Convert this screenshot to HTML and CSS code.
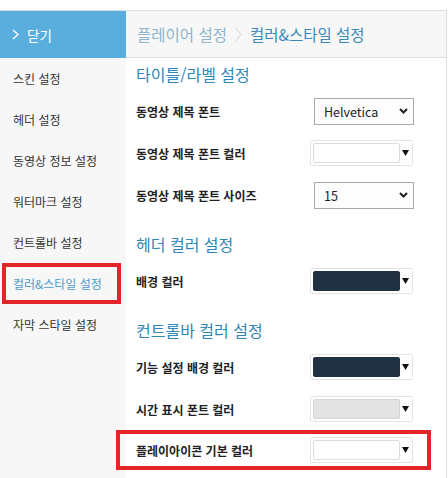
FILE: index.html
```html
<!DOCTYPE html>
<html lang="ko">
<head>
    <meta charset="UTF-8">
    <meta name="viewport" content="width=device-width, initial-scale=1.0">
    <title>플레이어 설정</title>
    <link rel="stylesheet" href="styles.css">
</head>
<body>

    <div class="panel">
        <aside class="side">
            <div class="side-close">
                <svg class="close-arrow" width="7" height="11" viewBox="0 0 7 11"><path d="M1 1 L6 5.5 L1 10" fill="none" stroke="#fff" stroke-width="1.3"/></svg>
                닫기
            </div>
            <ul class="menu">
                <li>스킨 설정</li>
                <li>헤더 설정</li>
                <li>동영상 정보 설정</li>
                <li>워터마크 설정</li>
                <li>컨트롤바 설정</li>
                <li class="active">컬러&amp;스타일 설정</li>
                <li>자막 스타일 설정</li>
            </ul>
        </aside>

        <main class="main">
            <div class="crumb">
                <span class="crumb-parent">플레이어 설정</span>
                <svg class="crumb-sep" width="7" height="15" viewBox="0 0 7 15"><path d="M1 1 L6 7.5 L1 14" fill="none" stroke="#d4d4d4" stroke-width="1"/></svg>
                <span class="crumb-current">컬러&amp;스타일 설정</span>
            </div>

            <div class="content">
                <!-- 타이틀/라벨 -->
                <section class="group">
                    <h2>타이틀/라벨 설정</h2>
                    <div class="row">
                        <label>동영상 제목 폰트</label>
                        <div class="select">Helvetica
                            <svg width="9" height="6" viewBox="0 0 9 6"><path d="M1 1 L4.5 4.5 L8 1" fill="none" stroke="#222" stroke-width="2"/></svg>
                        </div>
                    </div>
                    <div class="row">
                        <label>동영상 제목 폰트 컬러</label>
                        <div class="picker">
                            <span class="swatch"></span>
                            <svg width="7" height="6" viewBox="0 0 7 6"><path d="M0 0 H7 L3.5 6 Z" fill="#111"/></svg>
                        </div>
                    </div>
                    <div class="row">
                        <label>동영상 제목 폰트 사이즈</label>
                        <div class="select">15
                            <svg width="9" height="6" viewBox="0 0 9 6"><path d="M1 1 L4.5 4.5 L8 1" fill="none" stroke="#222" stroke-width="2"/></svg>
                        </div>
                    </div>
                </section>

                <!-- 헤더 -->
                <section class="group">
                    <h2>헤더 컬러 설정</h2>
                    <div class="row">
                        <label>배경 컬러</label>
                        <div class="picker">
                            <span class="swatch swatch-dark"></span>
                            <svg width="7" height="6" viewBox="0 0 7 6"><path d="M0 0 H7 L3.5 6 Z" fill="#111"/></svg>
                        </div>
                    </div>
                </section>

                <!-- 컨트롤바 -->
                <section class="group">
                    <h2>컨트롤바 컬러 설정</h2>
                    <div class="row">
                        <label>기능 설정 배경 컬러</label>
                        <div class="picker">
                            <span class="swatch swatch-dark"></span>
                            <svg width="7" height="6" viewBox="0 0 7 6"><path d="M0 0 H7 L3.5 6 Z" fill="#111"/></svg>
                        </div>
                    </div>
                    <div class="row">
                        <label>시간 표시 폰트 컬러</label>
                        <div class="picker">
                            <span class="swatch swatch-light"></span>
                            <svg width="7" height="6" viewBox="0 0 7 6"><path d="M0 0 H7 L3.5 6 Z" fill="#111"/></svg>
                        </div>
                    </div>
                    <div class="row row-marked">
                        <label>플레이아이콘 기본 컬러</label>
                        <div class="picker">
                            <span class="swatch"></span>
                            <svg width="7" height="6" viewBox="0 0 7 6"><path d="M0 0 H7 L3.5 6 Z" fill="#111"/></svg>
                        </div>
                    </div>
                </section>
            </div>
        </main>
    </div>

</body>
</html>
```

FILE: styles.css
```css
/* Page */
body {
    margin: 0;
    font-family: "Noto Sans CJK KR", "Noto Sans", sans-serif;
    color: #333;
    background: #fff;
    overflow: hidden;
}
.panel {
    margin-top: 10px;
    width: 446px;
    height: 467px;
    border-top: 1px solid #dedede;
    border-right: 1px solid #dedede;
    display: grid;
    grid-template-columns: 126px 1fr;
}
/* Left menu */
.side {
    background: #f7f7f7;
}
.side-close {
    height: 47px;
    background: #5aaedd;
    color: #fff;
    font-size: 13.5px;
    display: flex;
    align-items: center;
    gap: 8px;
    padding-left: 12px;
}
.menu {
    list-style: none;
    margin: 0;
    padding: 0;
}
.menu li {
    height: 41px;
    line-height: 41px;
    margin: 0 5px 0 2px;
    padding-left: 11px;
    font-size: 12px;
    color: #333;
}
.menu li.active {
    color: #4d9bcb;
    box-shadow: inset 0 0 0 4px #e3252a;
}
/* Right side */
.main {
    background: #fff;
    min-width: 0;
}
.crumb {
    height: 46px;
    background: #f7f7f7;
    border-bottom: 1px solid #dedede;
    display: flex;
    align-items: center;
    gap: 8px;
    padding-left: 11px;
    font-size: 15.5px;
}
.crumb-parent {
    color: #8db4cb;
}
.crumb-current {
    color: #3a8ab8;
}
.content {
    padding: 4px 32px 0 10px;
}
.group + .group {
    margin-top: 16px;
}
.group h2 {
    margin: 0 0 4px;
    font-size: 16px;
    line-height: 24px;
    font-weight: normal;
    color: #2f87b8;
}
.row {
    height: 42px;
    display: flex;
    align-items: center;
    justify-content: space-between;
}
.row label {
    font-size: 12px;
    font-weight: bold;
    color: #222;
}
.row-marked {
    margin: 0 -17px 0 -20px;
    padding: 0 17px 0 20px;
    height: 40px;
    outline: 4px solid #e3252a;
    outline-offset: -4px;
}
/* Controls */
.select {
    width: 100px;
    height: 27px;
    box-sizing: border-box;
    border: 1px solid #aaa;
    background: #fdfdfd;
    display: flex;
    align-items: center;
    justify-content: space-between;
    padding: 0 5px 0 9px;
    font-size: 12.5px;
    color: #222;
}
.picker {
    width: 103px;
    height: 26px;
    box-sizing: border-box;
    margin-right: 1px;
    border: 1px solid #e3e3e3;
    border-radius: 2px;
    background: #fff;
    display: flex;
    align-items: center;
    gap: 2px;
    padding: 2px 3px 2px 2px;
}
.swatch {
    flex: 1;
    height: 100%;
    box-sizing: border-box;
    border: 1px solid #dcdcdc;
    border-radius: 2px;
    background: #fff;
}
.swatch-dark {
    background: #223142;
    border-color: #223142;
}
.swatch-light {
    background: #e3e3e3;
    border-color: #d6d6d6;
}
```
